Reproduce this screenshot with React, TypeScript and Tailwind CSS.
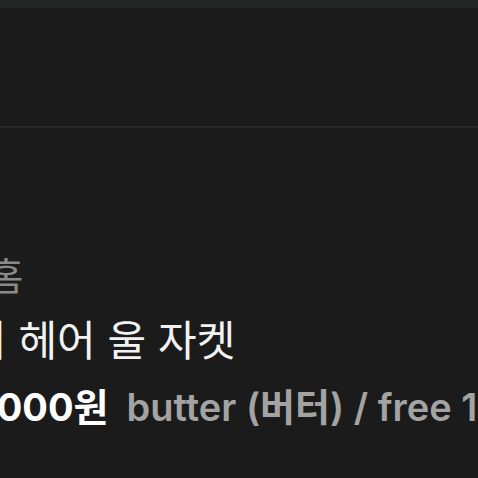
export default function App() {
  return (
    <div className="w-[478px] h-[478px] overflow-hidden bg-[#1b1b1b] flex flex-col" style={{ fontFamily: 'Inter, "Noto Sans CJK KR", sans-serif' }}>
      <div className="h-2 bg-[#232625] shrink-0" />
      <div className="h-[118px] shrink-0" />
      <div className="h-[2px] bg-[#262626] shrink-0" />
      <div className="flex flex-col pt-[128px] whitespace-nowrap">
        <div className="text-[38px] leading-[40px] text-[#8a8a8a] -ml-[232px]">아우터 브랜드홈</div>
        <div className="mt-[25px] text-[42px] leading-[40px] text-[#f2f2f2] -ml-[32px]">지 헤어 울 자켓</div>
        <div className="mt-[26px] text-[38px] leading-[40px] -ml-[64px] flex items-baseline">
          <span className="font-bold text-white">45,000원</span>
          <span className="ml-[18px] font-semibold text-[#a3a3a3]">butter (버터) / free 1사이즈</span>
        </div>
      </div>
    </div>
  );
}
